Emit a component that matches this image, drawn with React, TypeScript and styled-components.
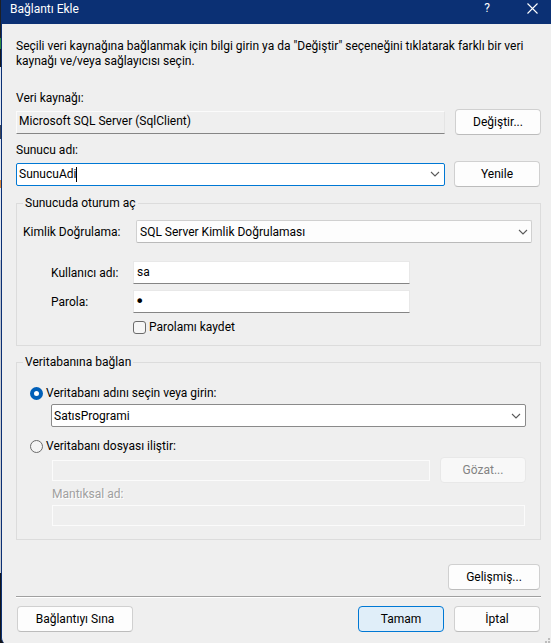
import React, { useState } from "react";
import styled, { createGlobalStyle, css } from "styled-components";

const GlobalStyle = createGlobalStyle`
  *, *::before, *::after { box-sizing: border-box; }
  body { margin: 0; background: #efefef; }
  button, input, select { font: inherit; color: inherit; margin: 0; }
`;

const Desktop = styled.div`
  min-height: 100vh;
  display: flex;
  padding-left: 1px;
  font: 12px/16px Roboto, "Open Sans", sans-serif;
  color: #000;
  background: linear-gradient(
    to bottom,
    #1d1f24 0 38px,
    #2f8a3a 38px 49px,
    #16181d 49px 67px,
    #dfe6f2 67px 125px,
    #3b4356 125px 139px,
    #dfe6f2 139px 180px,
    #d98a3d 180px 188px,
    #dfe6f2 188px 260px,
    #b9c1cf 260px 340px,
    #c9ccd1 340px 573px,
    #14161b 573px
  );
`;

const Dialog = styled.main`
  flex: 1;
  display: flex;
  flex-direction: column;
  border-left: 1px solid #0b3074;
  border-bottom-left-radius: 6px;
  background: #efefef;
`;

const TitleBar = styled.header`
  display: flex;
  align-items: flex-start;
  height: 24px;
  padding: 0 9px 0 8px;
  background: #0b3074;
  color: #fff;
`;

const Title = styled.h1`
  flex: 1;
  margin: 0;
  font: inherit;
  line-height: 18px;
`;

const TitleButton = styled.button`
  display: grid;
  place-items: center;
  width: 20px;
  height: 16px;
  margin-left: 25px;
  padding: 0;
  border: 0;
  background: none;
`;

const Body = styled.form`
  display: flex;
  flex-direction: column;
  padding: 15px 10px 12px 14px;
`;

const Intro = styled.p`
  margin: 0;
  line-height: 15px;
`;

const FieldLabel = styled.label`
  white-space: nowrap;
`;

const TopField = styled.div<{ $first?: boolean }>`
  display: grid;
  grid-template-columns: 1fr 86px;
  column-gap: ${(p) => (p.$first ? 10 : 9)}px;
  row-gap: 3px;
  align-items: center;
  margin-top: ${(p) => (p.$first ? 21 : 7)}px;
  padding-right: ${(p) => (p.$first ? 0 : 1)}px;

  ${FieldLabel} {
    grid-column: 1 / -1;
  }
`;

const Button = styled.button<{ $primary?: boolean; $width?: number }>`
  width: ${(p) => p.$width ?? 86}px;
  height: 26px;
  padding: 0;
  border: 1px solid ${(p) => (p.$primary ? "#0078d4" : "#d0d0d0")};
  border-bottom-color: ${(p) => (p.$primary ? "#0078d4" : "#bcbcbc")};
  border-radius: 4px;
  background: ${(p) => (p.$primary ? "#e0eef9" : "#fdfdfd")};
  text-align: center;

  &:disabled {
    border-color: #e8e8e8;
    background: #f8f8f8;
    color: #838383;
  }
`;

const TextInput = styled.input<{ $flat?: boolean }>`
  width: 100%;
  min-width: 0;
  height: 23px;
  padding: 0 3px 2px;
  border: 1px solid #e8e8e8;
  border-bottom-color: #858585;
  border-radius: 0;
  outline: 0;
  background: #fff;

  ${(p) =>
    p.$flat &&
    css`
      padding: 0 2px 2px;
      border-color: #fbfbfb #e4e4e4 #858585 #fbfbfb;
      background: #efefef;
    `}

  &:disabled {
    height: 21px;
    border-color: #fbfbfb;
    background: #efefef;
  }
`;

const PasswordInput = styled(TextInput)`
  padding: 0 1px;
  font-family: "DejaVu Sans", sans-serif;
  font-size: 16px;
`;

const comboFrame = css`
  height: 23px;
  border: 1px solid #8a8a8a;
  border-radius: 2px;
  background: #fff;
`;

const Combo = styled.div<{ $active?: boolean }>`
  ${comboFrame}
  display: flex;
  align-items: center;
  padding-left: 2px;
  ${(p) => p.$active && "border-color: #0078d4;"}
`;

const ComboInput = styled.input`
  field-sizing: content;
  height: 19px;
  padding: 0;
  border: 0;
  outline: 0;
  background: none;
`;

const Caret = styled.span`
  width: 1px;
  height: 15px;
  background: #000;
`;

const ComboButton = styled.button`
  display: grid;
  place-items: center;
  width: 18px;
  height: 21px;
  margin-left: auto;
  padding: 0;
  border: 0;
  background: none;
`;

const SelectFrame = styled.div`
  display: grid;
  align-items: center;

  > * {
    grid-area: 1 / 1;
  }

  > svg {
    justify-self: end;
    margin-right: 4px;
    pointer-events: none;
  }
`;

const Select = styled.select`
  ${comboFrame}
  width: 100%;
  padding: 0 20px 0 3px;
  border-color: #d0d0d0;
  border-bottom-color: #bababa;
  background: #fdfdfd;
  outline: 0;
  appearance: none;
`;

const Group = styled.fieldset`
  min-width: 0;
  margin: 8px 0 0;
  padding: 0;
  border: 1px solid #dcdcdc;
`;

const Legend = styled.legend`
  height: 16px;
  margin-left: 6px;
  padding: 0 2px;
`;

const AuthRow = styled.div`
  display: grid;
  grid-template-columns: 113px 1fr;
  align-items: center;
  padding: 9px 8px 0 6px;
`;

const Credentials = styled.div`
  display: grid;
  grid-template-columns: 82px minmax(0, 277px);
  row-gap: 6px;
  align-items: center;
  padding: 18px 9px 10px 34px;
`;

const Option = styled.label`
  display: flex;
  align-items: center;
  gap: 3px;
  white-space: nowrap;
`;

const CheckOption = styled(Option)`
  grid-column: 2;
`;

const CheckBox = styled.input`
  appearance: none;
  width: 13px;
  height: 13px;
  border: 1px solid #6b6b6b;
  border-radius: 3px;
  background: #f6f6f6;

  &:checked {
    background: #005fb8;
  }
`;

const Radio = styled.input`
  appearance: none;
  width: 13px;
  height: 13px;
  border: 1px solid #6b6b6b;
  border-radius: 50%;
  background: #f4f4f4;

  &:checked {
    border: 4px solid #005fb8;
    background: #fff;
  }
`;

const Database = styled.div`
  display: flex;
  flex-direction: column;
  padding: 15px 14px 13px 13px;
`;

const Indented = styled.div`
  display: flex;
  flex-direction: column;
  margin: 3px 0 11px 21px;
`;

const FileArea = styled.div`
  display: grid;
  grid-template-columns: 1fr 86px;
  column-gap: 10px;
  align-items: center;
  margin: 3px 0 0 22px;
`;

const LogicalName = styled.div`
  grid-column: 1 / -1;
  display: flex;
  flex-direction: column;
  gap: 3px;
  margin-top: 3px;
  padding-right: 1px;
`;

const DisabledLabel = styled(FieldLabel)`
  color: #a0a0a0;
  text-shadow: 1px 1px 0 #fff;
`;

const Advanced = styled.div`
  display: flex;
  justify-content: flex-end;
  margin-top: 24px;
  padding-right: 1px;
`;

const Rule = styled.hr`
  width: 100%;
  height: 2px;
  margin: 6px 0 8px;
  border: 0;
  border-top: 1px solid #a0a0a0;
  border-bottom: 1px solid #fff;
`;

const Actions = styled.footer`
  display: flex;
  gap: 10px;
  padding: 0 1px;

  > :first-child {
    margin-right: auto;
  }
`;

const Grip = styled.svg`
  position: absolute;
  right: 0;
  bottom: 0;
`;

const Frame = styled.div`
  position: relative;
`;

const Chevron = () => (
  <svg width="10" height="6" viewBox="0 0 10 6" fill="none" aria-hidden="true">
    <path d="M1 1l4 4 4-4" stroke="#5a5a5a" strokeWidth="1.1" />
  </svg>
);

export default function App() {
  const [server, setServer] = useState("SunucuAdi");
  const [database, setDatabase] = useState("SatısProgrami");
  const [source, setSource] = useState("name");

  return (
    <Frame>
      <GlobalStyle />
      <Desktop>
        <Dialog>
          <TitleBar>
            <Title>Bağlantı Ekle</Title>
            <TitleButton type="button" aria-label="Yardım">?</TitleButton>
            <TitleButton type="button" aria-label="Kapat">
              <svg width="11" height="11" viewBox="0 0 11 11" stroke="#fff" strokeWidth="1.1">
                <path d="M.5.5l10 10M10.5.5l-10 10" />
              </svg>
            </TitleButton>
          </TitleBar>
          <Body onSubmit={(e) => e.preventDefault()}>
            <Intro>
              Seçili veri kaynağına bağlanmak için bilgi girin ya da "Değiştir" seçeneğini tıklatarak farklı bir veri
              kaynağı ve/veya sağlayıcısı seçin.
            </Intro>

            <TopField $first>
              <FieldLabel htmlFor="source">Veri kaynağı:</FieldLabel>
              <TextInput id="source" $flat readOnly value="Microsoft SQL Server (SqlClient)" />
              <Button type="button">Değiştir...</Button>
            </TopField>

            <TopField>
              <FieldLabel htmlFor="server">Sunucu adı:</FieldLabel>
              <Combo $active>
                <ComboInput id="server" value={server} onChange={(e) => setServer(e.target.value)} />
                <Caret />
                <ComboButton type="button" aria-label="Sunucu listesi"><Chevron /></ComboButton>
              </Combo>
              <Button type="button">Yenile</Button>
            </TopField>

            <Group>
              <Legend>Sunucuda oturum aç</Legend>
              <AuthRow>
                <FieldLabel htmlFor="auth">Kimlik Doğrulama:</FieldLabel>
                <SelectFrame>
                  <Select id="auth">
                    <option>SQL Server Kimlik Doğrulaması</option>
                  </Select>
                  <Chevron />
                </SelectFrame>
              </AuthRow>
              <Credentials>
                <FieldLabel htmlFor="user">Kullanıcı adı:</FieldLabel>
                <TextInput id="user" defaultValue="sa" />
                <FieldLabel htmlFor="password">Parola:</FieldLabel>
                <PasswordInput id="password" type="password" defaultValue="1" />
                <CheckOption>
                  <CheckBox type="checkbox" />
                  Parolamı kaydet
                </CheckOption>
              </Credentials>
            </Group>

            <Group>
              <Legend>Veritabanına bağlan</Legend>
              <Database>
                <Option>
                  <Radio type="radio" name="db" checked={source === "name"} onChange={() => setSource("name")} />
                  Veritabanı adını seçin veya girin:
                </Option>
                <Indented>
                  <Combo>
                    <ComboInput
                      aria-label="Veritabanı adı"
                      value={database}
                      onChange={(e) => setDatabase(e.target.value)}
                    />
                    <ComboButton type="button" aria-label="Veritabanı listesi"><Chevron /></ComboButton>
                  </Combo>
                </Indented>
                <Option>
                  <Radio type="radio" name="db" checked={source === "file"} onChange={() => setSource("file")} />
                  Veritabanı dosyası iliştir:
                </Option>
                <FileArea>
                  <TextInput aria-label="Veritabanı dosyası" disabled={source !== "file"} />
                  <Button type="button" disabled={source !== "file"}>Gözat...</Button>
                  <LogicalName>
                    <DisabledLabel htmlFor="logical">Mantıksal ad:</DisabledLabel>
                    <TextInput id="logical" disabled={source !== "file"} />
                  </LogicalName>
                </FileArea>
              </Database>
            </Group>

            <Advanced>
              <Button type="button" $width={92}>Gelişmiş...</Button>
            </Advanced>
            <Rule />
            <Actions>
              <Button type="button" $width={116}>Bağlantıyı Sına</Button>
              <Button type="submit" $primary>Tamam</Button>
              <Button type="button">İptal</Button>
            </Actions>
          </Body>
        </Dialog>
      </Desktop>
      <Grip width="6" height="6" viewBox="0 0 6 6" fill="#bdbdbd" aria-hidden="true">
        <path d="M3 0h2v2H3zM0 3h2v2H0zM3 3h2v2H3z" />
      </Grip>
    </Frame>
  );
}
